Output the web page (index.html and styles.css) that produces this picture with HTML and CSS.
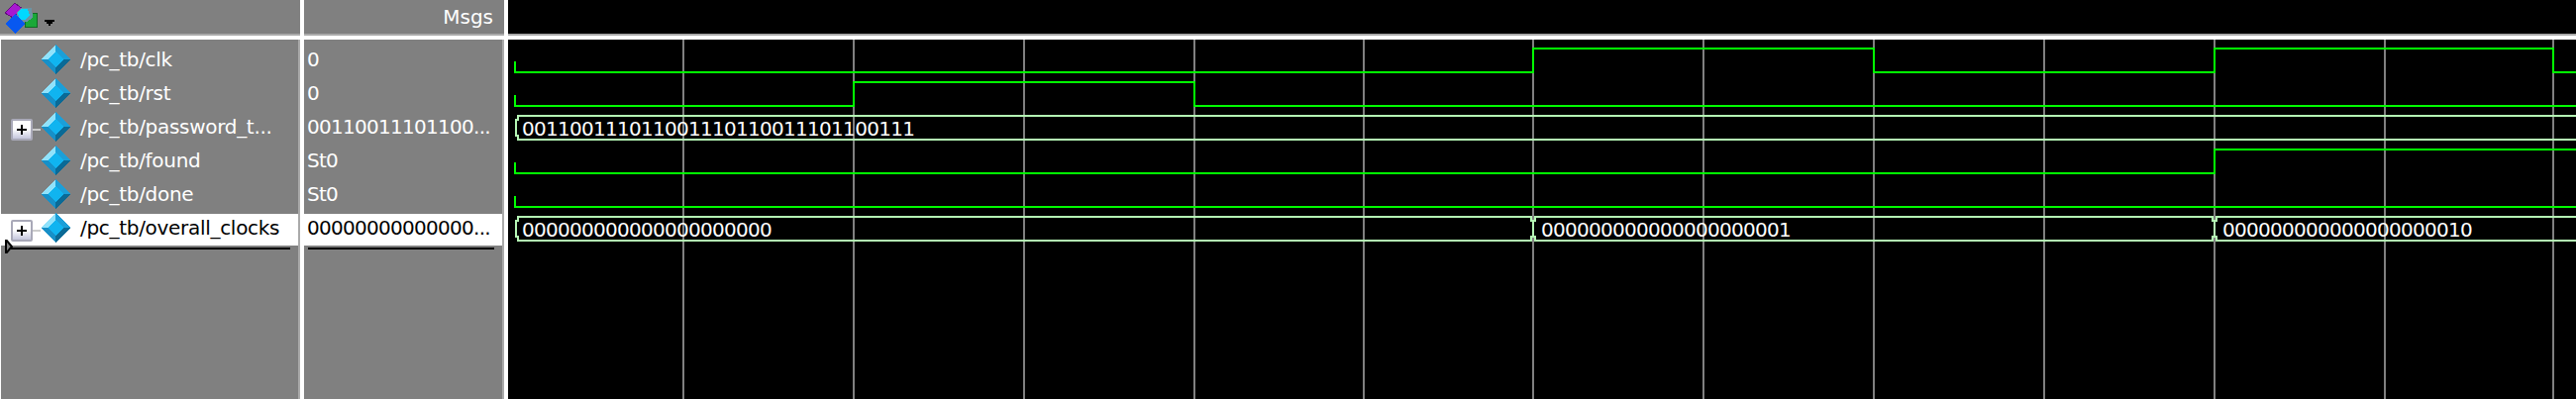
FILE: index.html
```html
<!DOCTYPE html>
<html lang="en">
  <head>
    <meta charset="UTF-8" />
    <title>Wave</title>
    <link rel="stylesheet" href="styles.css">
  </head>
  <body>
    <svg class="defs" width="0" height="0">
      <symbol id="diamond" viewBox="0 0 30 30">
        <polygon points="15,0 30,15 15,15" fill="#1c9fd8" />
        <polygon points="0,15 15,0 15,15" fill="#90e2fb" />
        <polygon points="0,15 15,30 15,15" fill="#1790c8" />
        <polygon points="15,30 30,15 15,15" fill="#0a6a96" />
        <polygon points="15,7 23,15 15,23 7,15" fill="#10b4f0" />
      </symbol>
    </svg>

    <div class="wave-window">
      <div class="col col-names">
        <div class="col-head">
          <svg class="wave-logo" width="38" height="34" viewBox="0 0 38 34">
            <polygon points="5,13 15,3 23,9 13,18" fill="#a818d0" stroke="#62107c" stroke-width="1" />
            <rect x="25" y="13" width="12" height="14" fill="#1aa838" stroke="#116a24" stroke-width="1" />
            <polygon points="17,12 21,8 32,8 33,18 27,22 17,22" fill="#6c93a4" />
            <polygon points="18,13 21,9 28,9 30,15 26,20 20,20" fill="#00d8ff" />
            <polygon points="15,14 25,24 15,34 5,24" fill="#0858f0" />
          </svg>
          <svg class="wave-caret" width="10" height="6" viewBox="0 0 10 6">
            <polygon points="0,0 10,0 10,2 8,2 8,4 6,4 6,6 4,6 4,4 2,4 2,2 0,2" fill="#000" />
          </svg>
        </div>
        <div class="rows rows-names">
          <div class="row">
            <span class="expander-slot"></span>
            <svg class="signal-icon"><use href="#diamond" /></svg>
            <span class="signal-name">/pc_tb/clk</span>
          </div>
          <div class="row">
            <span class="expander-slot"></span>
            <svg class="signal-icon"><use href="#diamond" /></svg>
            <span class="signal-name">/pc_tb/rst</span>
          </div>
          <div class="row">
            <span class="expander-slot"><span class="expander"></span><span class="connector"></span></span>
            <svg class="signal-icon"><use href="#diamond" /></svg>
            <span class="signal-name">/pc_tb/password_t...</span>
          </div>
          <div class="row">
            <span class="expander-slot"></span>
            <svg class="signal-icon"><use href="#diamond" /></svg>
            <span class="signal-name">/pc_tb/found</span>
          </div>
          <div class="row">
            <span class="expander-slot"></span>
            <svg class="signal-icon"><use href="#diamond" /></svg>
            <span class="signal-name">/pc_tb/done</span>
          </div>
          <div class="row row-active">
            <span class="expander-slot"><span class="expander"></span><span class="connector"></span></span>
            <svg class="signal-icon"><use href="#diamond" /></svg>
            <span class="signal-name">/pc_tb/overall_clocks</span>
          </div>
          <div class="drop-line drop-line-names"></div>
          <svg class="drop-arrow" width="8" height="14" viewBox="0 0 8 14">
            <polygon points="1,0 7,7 1,14" fill="#808080" stroke="#000" stroke-width="2" />
          </svg>
        </div>
      </div>

      <div class="col col-values">
        <div class="col-head col-head-msgs">Msgs</div>
        <div class="rows">
          <div class="row value">0</div>
          <div class="row value">0</div>
          <div class="row value">00110011101100...</div>
          <div class="row value">St0</div>
          <div class="row value">St0</div>
          <div class="row value row-active">00000000000000...</div>
          <div class="drop-line drop-line-values"></div>
        </div>
      </div>

      <div class="waves">
        <div class="waves-head"></div>
        <svg class="waves-plot" viewBox="513 40 2088 363" width="2088" height="363">
          <g class="grid">
            <line x1="690" y1="40" x2="690" y2="403" />
            <line x1="862" y1="40" x2="862" y2="403" />
            <line x1="1034" y1="40" x2="1034" y2="403" />
            <line x1="1206" y1="40" x2="1206" y2="403" />
            <line x1="1377" y1="40" x2="1377" y2="403" />
            <line x1="1548" y1="40" x2="1548" y2="403" />
            <line x1="1720" y1="40" x2="1720" y2="403" />
            <line x1="1892" y1="40" x2="1892" y2="403" />
            <line x1="2064" y1="40" x2="2064" y2="403" />
            <line x1="2236" y1="40" x2="2236" y2="403" />
            <line x1="2408" y1="40" x2="2408" y2="403" />
            <line x1="2578" y1="40" x2="2578" y2="403" />
          </g>

          <path class="wire" d="M520 62 V73 H1548 V49 H1892 V73 H2236 V49 H2578 V73 H2601" />
          <path class="wire" d="M520 96 V107 H862 V83 H1206 V107 H2601" />
          <path class="wire" d="M520 164 V175 H2236 V151 H2601" />
          <path class="wire" d="M520 198 V209 H2601" />

          <path class="bus" d="M2601 117 H523 V121 H521 V137 H523 V141 H2601" />
          <text class="bus-value" x="527" y="137">001100111011001110110011101100111</text>

          <path class="bus" d="M1546 219 H523 V223 H521 V239 H523 V243 H1546 V239 H1548 V223 H1546 Z" />
          <path class="bus" d="M2234 219 H1550 V223 H1548 V239 H1550 V243 H2234 V239 H2236 V223 H2234 Z" />
          <path class="bus" d="M2601 219 H2238 V223 H2236 V239 H2238 V243 H2601" />
          <text class="bus-value" x="527" y="239">000000000000000000000</text>
          <text class="bus-value" x="1556" y="239">000000000000000000001</text>
          <text class="bus-value" x="2244" y="239">000000000000000000010</text>
        </svg>
      </div>
    </div>
  </body>
</html>
```

FILE: styles.css
```css
html,
body {
  margin: 0;
  height: 100%;
  background: #000;
  overflow: hidden;
}

.defs {
  position: absolute;
}

.wave-window {
  display: flex;
  height: 403px;
  font-family: "DejaVu Sans", sans-serif;
  font-size: 20px;
  color: #fff;
}

.col {
  flex: none;
  display: flex;
  flex-direction: column;
  box-sizing: border-box;
  background: #808080;
  border-right: 4px solid #fff;
}

.col-names {
  width: 307px;
}

.col-values {
  width: 206px;
}

.col-head {
  flex: none;
  display: flex;
  align-items: flex-start;
  box-sizing: border-box;
  height: 40px;
  border-bottom: 4px solid #fff;
  box-shadow: inset 0 -2px #aaa;
  padding-bottom: 2px;
}

.col-head-msgs {
  justify-content: flex-end;
  align-items: center;
  padding-right: 11px;
}

.wave-logo {
  flex: none;
  shape-rendering: crispEdges;
}

.wave-caret {
  flex: none;
  margin: 20px 0 0 7px;
  shape-rendering: crispEdges;
}

.rows {
  position: relative;
  flex: 1;
  display: flex;
  flex-direction: column;
  gap: 2px;
  padding-top: 6px;
  border-right: 2px solid #aaa;
}

.rows-names {
  border-left: 1px solid #fff;
}

.row {
  flex: none;
  display: flex;
  align-items: center;
  box-sizing: border-box;
  height: 32px;
  padding-bottom: 4px;
}

.row-active {
  background: #fff;
  color: #000;
}

.value {
  padding-left: 3px;
  letter-spacing: -0.72px;
}

.expander-slot {
  flex: none;
  display: flex;
  align-items: center;
  width: 30px;
  height: 22px;
  margin: 6px 0 0 10px;
}

.expander {
  flex: none;
  box-sizing: border-box;
  width: 22px;
  height: 22px;
  border: 2px solid #a9a9b8;
  border-radius: 2px;
  background:
    linear-gradient(#000, #000) center / 10px 2px no-repeat,
    linear-gradient(#000, #000) center / 2px 10px no-repeat,
    linear-gradient(#fff, #fff 45%, #c4c6dc);
}

.connector {
  flex: 1;
  height: 2px;
  background: #ccc;
}

.signal-icon {
  flex: none;
  width: 30px;
  height: 30px;
  shape-rendering: crispEdges;
}

.signal-name {
  margin-left: 10px;
  letter-spacing: -0.3px;
  white-space: nowrap;
}

.drop-line {
  flex: none;
  height: 2px;
  background: #000;
}

.drop-line-names {
  margin: 0 8px 0 10px;
}

.drop-line-values {
  margin: 0 8px 0 4px;
}

.drop-arrow {
  position: absolute;
  left: 4px;
  top: 202px;
}

.waves {
  flex: 1;
  min-width: 0;
  display: flex;
  flex-direction: column;
}

.waves-head {
  flex: none;
  box-sizing: border-box;
  height: 40px;
  border-bottom: 4px solid #fff;
  box-shadow: inset 0 -2px #aaa;
}

.waves-plot {
  display: block;
  flex: none;
}

.grid line {
  stroke: #808080;
  stroke-width: 2;
  shape-rendering: crispEdges;
}

.wire,
.bus {
  fill: none;
  stroke-width: 2;
  shape-rendering: crispEdges;
}

.wire {
  stroke: #00ff00;
}

.bus {
  stroke: #b4f6b4;
}

.bus-value {
  fill: #fff;
  font-family: "DejaVu Sans", sans-serif;
  font-size: 20px;
  letter-spacing: -0.72px;
}
```
